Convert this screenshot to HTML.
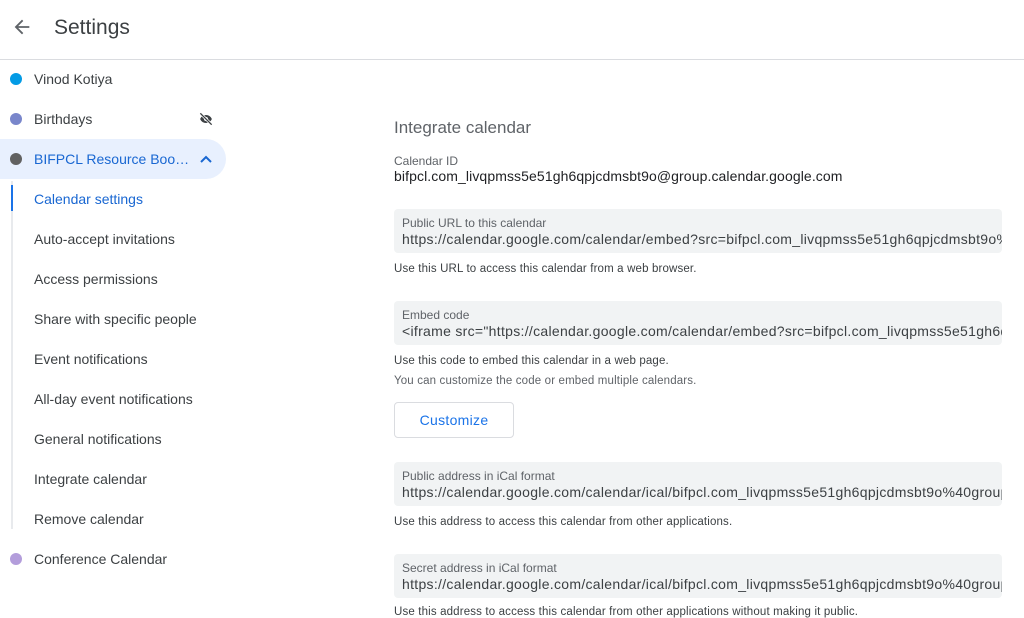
<!DOCTYPE html>
<html><head><meta charset="utf-8"><style>
*{margin:0;padding:0;box-sizing:border-box}
body{width:1024px;height:611px;overflow:hidden;background:#fff;font-family:"Liberation Sans",Arial,sans-serif;color:#3c4043;position:relative}
.hdr{position:absolute;left:0;top:0;width:1024px;height:60px;border-bottom:1px solid #dadce0}
.hdr .t{position:absolute;left:54px;top:16px;font-size:21px;color:#3c4043}
.hdr svg{position:absolute;left:11px;top:16px}
.row{position:absolute;left:0;height:40px;width:226px;font-size:14px;line-height:40px;color:#3c4043}
.row .d{position:absolute;left:10px;top:14px;width:12px;height:12px;border-radius:50%}
.row .l{position:absolute;left:34px;top:0;white-space:nowrap}
.sel{background:#e8f0fe;border-radius:0 20px 20px 0;color:#1967d2}
.vline{position:absolute;left:11px;top:181px;width:2px;height:348px;background:#e8eaed}
.vact{position:absolute;left:11px;top:185px;width:2px;height:26px;background:#1a73e8}
.r{position:absolute;left:394px;white-space:nowrap}
.box{position:absolute;left:394px;width:608px;height:44px;background:#f1f3f4;border-radius:4px;overflow:hidden}
.box .a{position:absolute;left:8px;top:7px;font-size:12px;color:#5f6368}
.box .b{position:absolute;left:8px;top:22px;font-size:14px;color:#3c4043;white-space:nowrap;letter-spacing:0.3px}
.h{font-size:11.5px;color:#3c4043;letter-spacing:0.15px}
</style></head><body>
<div class="hdr">
<svg width="22" height="22" viewBox="0 0 24 24"><path d="M20 11H7.8l5.6-5.6L12 4l-8 8 8 8 1.4-1.4L7.8 13H20z" fill="#5f6368"/></svg>
<div class="t">Settings</div>
</div>
<div class="row" style="top:59px"><span class="d" style="background:#039be5"></span><span class="l">Vinod Kotiya</span></div>
<div class="row" style="top:99px"><span class="d" style="background:#7986cb"></span><span class="l">Birthdays</span>
<svg style="position:absolute;left:197px;top:12px" width="18" height="16" viewBox="0 0 24 24"><path d="M12 6c3.8 0 7.2 2.1 8.8 6-1.6 3.9-5 6-8.8 6s-7.2-2.1-8.8-6C4.8 8.1 8.2 6 12 6zm0 3a3 3 0 100 6 3 3 0 000-6z" fill="#3c4043"/><path d="M3 3l18 18" stroke="#fff" stroke-width="4"/><path d="M3.5 3.5l17 17" stroke="#3c4043" stroke-width="2"/></svg></div>
<div class="row sel" style="top:139px"><span class="d" style="background:#616161"></span><span class="l" style="color:#1967d2">BIFPCL Resource Boo…</span>
<svg style="position:absolute;left:199px;top:14px" width="14" height="12" viewBox="0 0 14 12"><path d="M2 9l5-5 5 5" stroke="#1967d2" stroke-width="2" fill="none"/></svg></div>
<div class="vline"></div><div class="vact"></div>
<div class="row" style="top:179px"><span class="l" style="color:#1967d2">Calendar settings</span></div>
<div class="row" style="top:219px"><span class="l">Auto-accept invitations</span></div>
<div class="row" style="top:259px"><span class="l">Access permissions</span></div>
<div class="row" style="top:299px"><span class="l">Share with specific people</span></div>
<div class="row" style="top:339px"><span class="l">Event notifications</span></div>
<div class="row" style="top:379px"><span class="l">All-day event notifications</span></div>
<div class="row" style="top:419px"><span class="l">General notifications</span></div>
<div class="row" style="top:459px"><span class="l">Integrate calendar</span></div>
<div class="row" style="top:499px"><span class="l">Remove calendar</span></div>
<div class="row" style="top:539px"><span class="d" style="background:#b39ddb"></span><span class="l">Conference Calendar</span></div>

<div class="r" style="top:118px;font-size:17px;color:#5f6368">Integrate calendar</div>
<div class="r" style="top:154px;font-size:12px;color:#5f6368">Calendar ID</div>
<div class="r" style="top:168px;font-size:14px;color:#202124;letter-spacing:0.1px">bifpcl.com_livqpmss5e51gh6qpjcdmsbt9o@group.calendar.google.com</div>
<div class="box" style="top:209px"><div class="a">Public URL to this calendar</div><div class="b">https://calendar.google.com/calendar/embed?src=bifpcl.com_livqpmss5e51gh6qpjcdmsbt9o%40group.calendar.google.com</div></div>
<div class="r h" style="top:263px">Use this URL to access this calendar from a web browser.</div>
<div class="box" style="top:301px"><div class="a">Embed code</div><div class="b">&lt;iframe src="https://calendar.google.com/calendar/embed?src=bifpcl.com_livqpmss5e51gh6qpjcdmsbt9o</div></div>
<div class="r h" style="top:355px">Use this code to embed this calendar in a web page.</div>
<div class="r h" style="top:375px;color:#5f6368">You can customize the code or embed multiple calendars.</div>
<div style="position:absolute;left:394px;top:402px;width:120px;height:36px;border:1px solid #dadce0;border-radius:4px;color:#1a73e8;font-size:14px;text-align:center;line-height:34px;letter-spacing:0.3px">Customize</div>
<div class="box" style="top:462px"><div class="a">Public address in iCal format</div><div class="b">https://calendar.google.com/calendar/ical/bifpcl.com_livqpmss5e51gh6qpjcdmsbt9o%40group.calendar.google.com</div></div>
<div class="r h" style="top:516px">Use this address to access this calendar from other applications.</div>
<div class="box" style="top:554px"><div class="a">Secret address in iCal format</div><div class="b">https://calendar.google.com/calendar/ical/bifpcl.com_livqpmss5e51gh6qpjcdmsbt9o%40group.calendar.google.com</div></div>
<div class="r h" style="top:606px">Use this address to access this calendar from other applications without making it public.</div>
</body></html>
